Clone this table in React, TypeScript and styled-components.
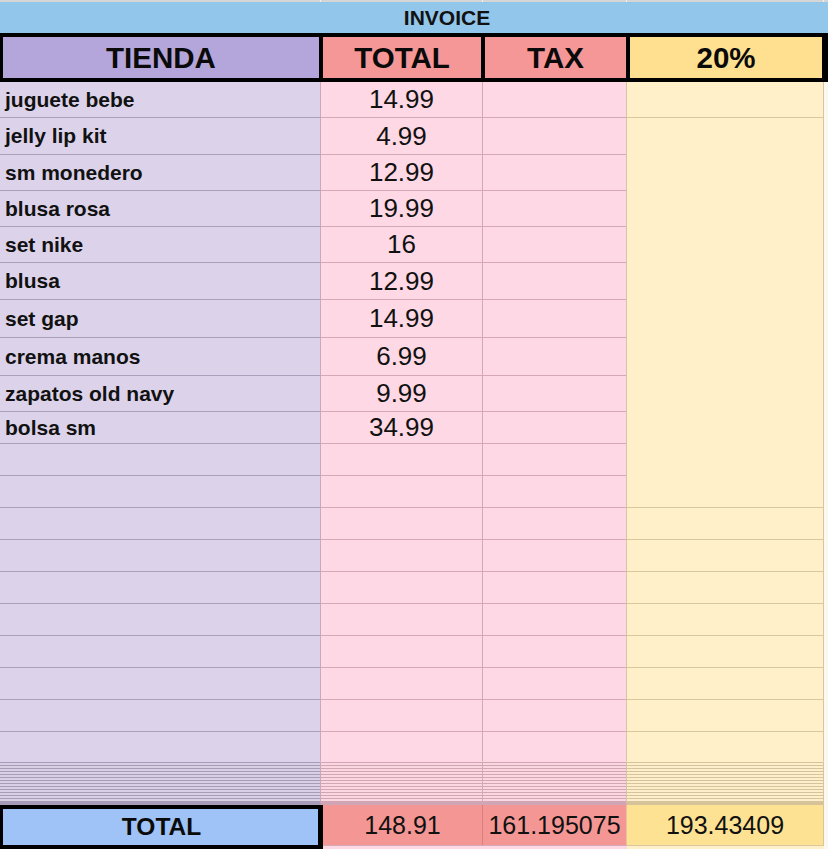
import React from 'react';
import styled, { createGlobalStyle, css } from 'styled-components';

const GlobalStyle = createGlobalStyle`
  html, body { margin: 0; padding: 0; background: #ffffff; }
  body { font-family: "Liberation Sans", Arial, sans-serif; color: #111; }
  * { box-sizing: border-box; }
`;

type Tone = 'purple' | 'pink' | 'yellow';

const TONES: Record<Tone, { bg: string; line: string; denseBg: string; denseLine: string }> = {
  purple: { bg: '#dcd3ea', line: '#a9a0bb', denseBg: '#d9d0e6', denseLine: '#a79db8' },
  pink: { bg: '#fed9e5', line: '#d4a8b7', denseBg: '#fbd7e2', denseLine: '#d2a5b5' },
  yellow: { bg: '#fff0c9', line: '#dac69d', denseBg: '#fdefcb', denseLine: '#d6c39a' },
};

const COLS: { tone: Tone; side: string }[] = [
  { tone: 'purple', side: '#c9a8bc' },
  { tone: 'pink', side: '#d3a9b8' },
  { tone: 'pink', side: '#d8c3a6' },
  { tone: 'yellow', side: '#d9c59b' },
];

const ROW_HEIGHTS = [36, 37, 36, 36, 36, 37, 38, 38, 36, 32, 32, 32, 32, 32, 32, 32, 32, 32, 32, 30, 43];
const DENSE_ROW = ROW_HEIGHTS.length;
const FILLER_ROW = ROW_HEIGHTS.length - 1;

const ITEMS: [string, string][] = [
  ['juguete bebe', '14.99'],
  ['jelly lip kit', '4.99'],
  ['sm monedero', '12.99'],
  ['blusa rosa', '19.99'],
  ['set nike', '16'],
  ['blusa', '12.99'],
  ['set gap', '14.99'],
  ['crema manos', '6.99'],
  ['zapatos old navy', '9.99'],
  ['bolsa sm', '34.99'],
];

const Sheet = styled.div`
  width: 828px;
  display: flex;
  flex-direction: column;
  overflow: hidden;
`;

const TopStrip = styled.div`
  height: 2px;
  display: grid;
  grid-template-columns: 321px 162px 144px 197px 4px;
  background: #d5d5d5;
`;

const StripCell = styled.div`
  border-right: 1px solid #f0f0f0;
`;

const Banner = styled.div`
  height: 31px;
  background: #93c6eb;
  display: flex;
  align-items: center;
  justify-content: center;
  padding-left: 66px;
  padding-top: 1px;
  font-weight: 700;
  font-size: 21px;
  color: #111;
`;

const HeaderRow = styled.div`
  height: 49px;
  display: grid;
  grid-template-columns: 316px 158px 141px 192px;
  column-gap: 4px;
  background: #000;
  padding: 4px 6px 4px 3px;
`;

const HeaderCell = styled.div<{ $bg: string }>`
  background: ${(p) => p.$bg};
  display: flex;
  align-items: center;
  justify-content: center;
  font-weight: 700;
  font-size: 29.5px;
  color: #0a0a0a;
`;

const Body = styled.div`
  display: grid;
  grid-template-columns: 321px 162px 144px 197px 4px;
  grid-template-rows: ${ROW_HEIGHTS.map((h) => `${h}px`).join(' ')};
`;

const Cell = styled.div<{
  $col: number;
  $row: number;
  $span?: number;
  $noLine?: boolean;
  $dense?: boolean;
  $item?: boolean;
}>`
  grid-column: ${(p) => p.$col};
  grid-row: ${(p) => p.$row} / span ${(p) => p.$span ?? 1};
  background: ${(p) => TONES[COLS[p.$col - 1].tone].bg};
  border-right: 1px solid ${(p) => COLS[p.$col - 1].side};
  border-bottom: 1px solid ${(p) => (p.$noLine ? 'transparent' : TONES[COLS[p.$col - 1].tone].line)};
  display: flex;
  align-items: center;
  color: #111;
  ${(p) =>
    p.$item
      ? css`
          justify-content: flex-start;
          padding-left: 5px;
          font-weight: 700;
          font-size: 21px;
        `
      : css`
          justify-content: center;
          font-size: 26px;
        `}
  ${(p) =>
    p.$dense &&
    css`
      border-bottom: 3px solid ${TONES[COLS[p.$col - 1].tone].denseLine};
      background: repeating-linear-gradient(
        to bottom,
        ${TONES[COLS[p.$col - 1].tone].denseLine} 0px,
        ${TONES[COLS[p.$col - 1].tone].denseLine} 1.5px,
        ${TONES[COLS[p.$col - 1].tone].denseBg} 1.5px,
        ${TONES[COLS[p.$col - 1].tone].denseBg} 3px
      );
    `}
`;

const EdgeStrip = styled.div`
  grid-column: 5;
  grid-row: 1 / -1;
  background: #fbf8f1;
`;

const TotalRow = styled.div`
  display: grid;
  grid-template-columns: 323px 160px 144px 197px 4px;
  grid-template-rows: 40px 4px;
`;

const TotalLabel = styled.div`
  grid-column: 1;
  grid-row: 1 / span 2;
  background: #9fc3f6;
  border-style: solid;
  border-color: #000;
  border-width: 4px 5px 4px 3px;
  display: flex;
  align-items: center;
  justify-content: center;
  font-weight: 700;
  font-size: 24.5px;
  color: #0a0a0a;
  padding-left: 2px;
`;

const TotalValue = styled.div<{ $bg: string; $side: string }>`
  grid-row: 1;
  background: ${(p) => p.$bg};
  border-right: 1px solid ${(p) => p.$side};
  display: flex;
  align-items: center;
  justify-content: center;
  font-size: 25px;
  color: #111;
`;

const NextRowCell = styled.div<{ $bg: string; $line: string }>`
  grid-row: 2;
  background: ${(p) => p.$bg};
  border-top: 1px solid ${(p) => p.$line};
`;

export default function App() {
  const cells: React.ReactNode[] = [];
  ROW_HEIGHTS.forEach((_, i) => {
    const row = i + 1;
    const item = ITEMS[i];
    const dense = row === DENSE_ROW;
    const noLine = row === FILLER_ROW;
    cells.push(
      <Cell key={`a${row}`} $col={1} $row={row} $item $dense={dense} $noLine={noLine}>
        {item ? item[0] : null}
      </Cell>,
      <Cell key={`b${row}`} $col={2} $row={row} $dense={dense} $noLine={noLine}>
        {item ? item[1] : null}
      </Cell>,
      <Cell key={`c${row}`} $col={3} $row={row} $dense={dense} $noLine={noLine} />
    );
    if (row === 1) {
      cells.push(<Cell key={`d${row}`} $col={4} $row={row} />);
    } else if (row === 2) {
      cells.push(<Cell key="dmerged" $col={4} $row={2} $span={11} />);
    } else if (row > 12) {
      cells.push(<Cell key={`d${row}`} $col={4} $row={row} $dense={dense} $noLine={noLine} />);
    }
  });

  return (
    <>
      <GlobalStyle />
      <Sheet>
        <TopStrip>
          <StripCell />
          <StripCell />
          <StripCell />
          <StripCell />
          <div />
        </TopStrip>
        <Banner>INVOICE</Banner>
        <HeaderRow>
          <HeaderCell $bg="#b4a6da">TIENDA</HeaderCell>
          <HeaderCell $bg="#f59796">TOTAL</HeaderCell>
          <HeaderCell $bg="#f59796">TAX</HeaderCell>
          <HeaderCell $bg="#fee090">20%</HeaderCell>
        </HeaderRow>
        <Body>
          {cells}
          <EdgeStrip />
        </Body>
        <TotalRow>
          <TotalLabel>TOTAL</TotalLabel>
          <TotalValue $bg="#f49794" $side="#d9807f">148.91</TotalValue>
          <TotalValue $bg="#f49794" $side="#e8c49a">161.195075</TotalValue>
          <TotalValue $bg="#fde293" $side="#d9c59b">193.43409</TotalValue>
          <TotalValue $bg="#fbf8f1" $side="transparent" />
          <NextRowCell $bg="#fed9e5" $line="#d6abb9" />
          <NextRowCell $bg="#fed9e5" $line="#d6abb9" />
          <NextRowCell $bg="#fff0c9" $line="#dcc8a0" />
          <NextRowCell $bg="#fbf8f1" $line="transparent" />
        </TotalRow>
      </Sheet>
    </>
  );
}
